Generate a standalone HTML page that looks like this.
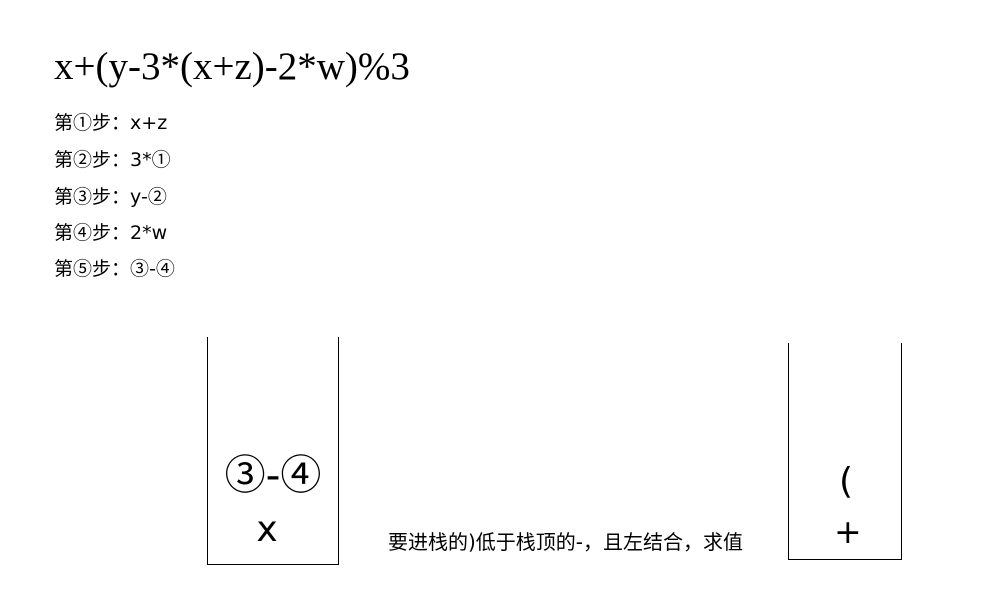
<!DOCTYPE html>
<html><head><meta charset="utf-8"><style>
body{margin:0;width:990px;height:600px;background:#fff;position:relative;font-family:"DejaVu Sans","Noto Sans CJK SC",sans-serif;color:#000;overflow:hidden}
.t{position:absolute;white-space:nowrap}
.h{left:54px;top:44px;font-family:"Liberation Serif","Noto Serif CJK SC",serif;font-size:39px;line-height:46px}
.s{left:54px;font-size:19px;line-height:22px}
.c{font-family:"Noto Sans CJK SC",sans-serif}
.stk{position:absolute;border:1px solid #000;border-top:none}
</style></head><body>
<div class="t h">x+(y-3*(x+z)-2*w)%3</div>
<div class="t s" style="top:111px">第<span class="c">①</span>步：x+z</div>
<div class="t s" style="top:148px">第<span class="c">②</span>步：3*<span class="c">①</span></div>
<div class="t s" style="top:185px">第<span class="c">③</span>步：y-<span class="c">②</span></div>
<div class="t s" style="top:221px">第<span class="c">④</span>步：2*w</div>
<div class="t s" style="top:257px">第<span class="c">⑤</span>步：<span class="c">③</span>-<span class="c">④</span></div>
<div class="stk" style="left:207px;top:337px;width:130px;height:227px"></div>
<div class="t" style="left:207px;width:132px;text-align:center;top:448px;font-size:41px;line-height:46px"><span class="c">③</span>-<span class="c">④</span></div>
<div class="t" style="left:207px;width:120px;text-align:center;top:510px;font-size:36px;line-height:40px">x</div>
<div class="t" style="left:388px;top:530px;font-size:20px;line-height:24px">要进栈的)低于栈顶的-，且左结合，求值</div>
<div class="stk" style="left:788px;top:343px;width:112px;height:216px"></div>
<div class="t" style="left:839px;top:462px;font-size:36px;line-height:40px">(</div>
<div class="t" style="left:834px;top:512px;font-size:33px;line-height:40px">+</div>
</body></html>
